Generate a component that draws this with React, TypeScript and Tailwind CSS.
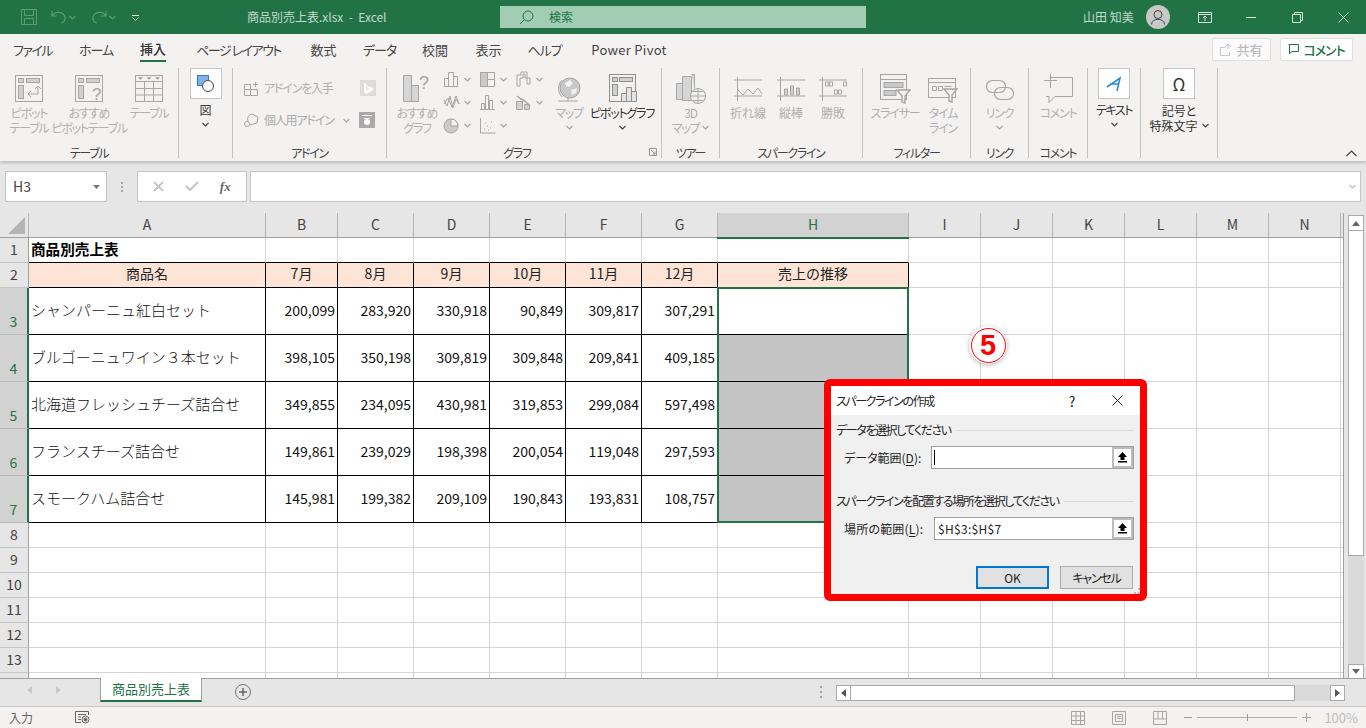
import React from 'react';

const G = '#a6a6a6';

const Svg: React.FC<{ w: number; h?: number; children: React.ReactNode; stroke?: string; className?: string }> = ({ w, h, children, stroke = G, className = '' }) => (
  <svg width={w} height={h ?? w} viewBox={`0 0 ${w} ${h ?? w}`} fill="none" stroke={stroke} strokeWidth="1" className={`shrink-0 ${className}`}>
    {children}
  </svg>
);

const Chev: React.FC<{ color?: string; className?: string }> = ({ color = G, className = '' }) => (
  <svg width="7" height="5" viewBox="0 0 7 5" fill="none" stroke={color} strokeWidth="1.2" className={`shrink-0 ${className}`}>
    <path d="M.5 1 3.5 4 6.5 1" />
  </svg>
);

const PivotIcon = ({ extra }: { extra?: boolean }) => (
  <Svg w={30}>
    <rect x="1.5" y="1.5" width="27" height="26" />
    <rect x="4.5" y="4.5" width="5" height="4" fill="#d0d0d0" />
    <rect x="12.5" y="4.5" width="13" height="4" fill="#d0d0d0" />
    <rect x="4.5" y="11.5" width="5" height="13" fill="#d0d0d0" />
    {extra ? (
      <text x="18" y="26" fontSize="17" fill={G} stroke="none" fontFamily="Liberation Sans">?</text>
    ) : (
      <path d="M24 12v8h-10m3-3-3 3 3 3M21 15l3-3 3 3" />
    )}
  </Svg>
);

const TableIcon = () => (
  <Svg w={30}>
    <rect x="1.5" y="1.5" width="27" height="26" />
    <path d="M1.5 7.5h27M1.5 14.5h27M1.5 21h27M10.5 7.5v20M19.5 7.5v20" />
    <path d="M4 3h5l-2.5 3zM12.5 3h5L15 6zM21 3h5l-2.5 3z" fill={G} stroke="none" />
  </Svg>
);

const ChartSmall = ({ kind }: { kind: number }) => (
  <Svg w={17}>
    {kind === 0 && <path d="M1.5 15.5v-8h4v8zM5.5 15.5v-14h5v14zM10.5 15.5v-10h4v10z" />}
    {kind === 1 && <path d="M1 6l3 6 3-10 3 12 3-9 3 5M1 10l4-6 4 9 4-11 3 8" />}
    {kind === 2 && <><circle cx="8" cy="9" r="7" fill="#c9c9c9" /><path d="M8 9V2a7 7 0 0 1 7 7z" fill="#f3f2f1" /></>}
    {kind === 3 && <><rect x="1.5" y="1.5" width="14" height="14" /><path d="M8.5 1.5v14M8.5 8.5h7" /><rect x="2" y="2" width="6" height="13" fill="#c9c9c9" stroke="none" /></>}
    {kind === 4 && <path d="M2.5 15.5v-6h3v6zM6.5 15.5v-14h3v14zM10.5 15.5v-9h3v9zM1 15.5h15" />}
    {kind === 5 && <><path d="M1.5 1v15h15" /><path d="M5 12h1M8 9h1M11 11h1M6 6h1M12 5h1M9 13h1" /></>}
    {kind === 6 && <path d="M2 15V4h4V1h6v6h3v6h-3V7h-2V3H8v4H5v8z" />}
    {kind === 7 && <><path d="M1.5 15.5v-8h6v8zM9.5 15.5v-5h5v5z" fill="#d0d0d0" /><path d="M2 2l4 3 4 2 5 5" strokeWidth="1.5" /></>}
  </Svg>
);

const Spark = ({ kind }: { kind: number }) => (
  <Svg w={30} h={26}>
    <path d="M1 4h28M1 20h28M4.5 1v24" />
    {kind === 0 && <path d="M5 14l5 5 5-6 5 5 5-6 4 6" />}
    {kind === 1 && <path d="M8.5 19v-6h3v6zM14.5 19v-9h3v9zM20.5 19v-7h3v7z" fill="#d0d0d0" />}
    {kind === 2 && <path d="M7.5 6h3v4h-3zM11.5 6h3v4h-3zM16.5 14h3v4h-3zM20.5 14h3v4h-3zM25.5 6h3v4h-3z" />}
  </Svg>
);

const Slicer = () => (
  <Svg w={32}>
    <rect x="1.5" y="1.5" width="26" height="25" />
    <path d="M1.5 6.5h26" />
    <rect x="5" y="9.5" width="19" height="5" fill="#c9c9c9" />
    <rect x="5" y="17.5" width="12" height="5" fill="#c9c9c9" />
    <path d="M18 17h13l-5 6v7l-3-1v-6z" fill="#f3f2f1" strokeWidth="1.4" />
  </Svg>
);

const Timeline = () => (
  <Svg w={32}>
    <rect x="1.5" y="5.5" width="27" height="19" />
    <path d="M1.5 9.5h27" />
    <path d="M5.5 13.5h4v4h-4zM11.5 13.5h4v4h-4zM17.5 13.5h7" />
    <path d="M17 16h13l-5 6v7l-3-1v-6z" fill="#f3f2f1" strokeWidth="1.4" />
  </Svg>
);

const Group: React.FC<{ w: string; label: string; pl?: string; launcher?: boolean; children: React.ReactNode }> = ({ w, label, pl = 'pl-0', launcher, children }) => (
  <div className={`${w} h-[90px] shrink-0 flex flex-col border-r border-[#c4c4c4] mt-[2px] ${launcher ? 'pr-[14px]' : ''}`}>
    <div className={`flex flex-1 min-h-0 ${pl}`}>{children}</div>
    <div className="relative h-[12px] pt-[1px] text-center text-[12px] leading-[12px] tracking-[-1.3px] text-[#444] whitespace-nowrap">
      {label}
      {launcher && (
        <svg width="8" height="8" viewBox="0 0 8 8" fill="none" stroke="#999" className="absolute right-[-10px] top-[2px]">
          <path d="M.5.5h7v7h-7zM2 2l4 4M6 3.5V6H3.5" />
        </svg>
      )}
    </div>
  </div>
);

const Big: React.FC<{ w: string; icon: React.ReactNode; lines: string[]; chev?: boolean; tail?: boolean; on?: boolean; kanji?: boolean }> = ({ w, icon, lines, chev, tail, on, kanji }) => (
  <div className={`${w} shrink-0 flex flex-col items-center pt-[3px] text-[12px] leading-[14.5px] whitespace-nowrap ${kanji ? '' : 'tracking-[-1.2px]'} ${on ? 'text-[#333]' : 'text-[#b0b0b0]'}`}>
    <div className="h-[35px] flex items-center justify-center">{icon}</div>
    {lines.map((l, i) => (
      <div key={l} className="h-[14.5px] flex items-center gap-[3px]">
        {l}
        {tail && i === lines.length - 1 && <Chev />}
      </div>
    ))}
    {chev && <div className="h-[14px] flex items-center"><Chev color={on ? '#444' : G} /></div>}
  </div>
);

const BoxIcon: React.FC<{ children: React.ReactNode }> = ({ children }) => (
  <div className="w-[32px] h-[31px] bg-white border border-[#c6c6c6] flex items-center justify-center">{children}</div>
);

const Ribbon = () => (
  <div className="h-[95px] bg-[#f3f2f1] flex shadow-[0_2px_3px_rgba(0,0,0,0.18)] relative z-10">
    <Group w="w-[179px]" label="テーブル" pl="pl-[4px]">
      <Big w="w-[50px]" icon={<PivotIcon />} lines={['ピボット', 'テーブル']} />
      <Big w="w-[70px]" icon={<PivotIcon extra />} lines={['おすすめ', 'ピボットテーブル']} />
      <Big w="w-[50px]" icon={<TableIcon />} lines={['テーブル']} />
    </Group>
    <Group w="w-[54px]" label="">
      <div className="w-full flex flex-col items-center text-[12px] text-[#333] leading-[14px]">
        <BoxIcon>
          <svg width="18" height="18" viewBox="0 0 18 18">
            <rect x=".5" y=".5" width="11" height="10" fill="#7fb2e5" stroke="#2b7cd3" />
            <circle cx="11" cy="11" r="5.5" fill="#fff" stroke="#444" />
          </svg>
        </BoxIcon>
        <div className="mt-[4px] h-[14px]">図</div>
        <Chev color="#444" className="mt-[5px]" />
      </div>
    </Group>
    <Group w="w-[154px]" label="アドイン" pl="pl-[11px]">
      <div className="flex flex-col pt-[4px] text-[12px] tracking-[-1.2px] text-[#b0b0b0]">
        <div className="flex items-center h-[32px]">
          <Svg w={16}><path d="M.5 4.5h6v5h-6zM.5 9.5h6v6h-6zM6.5 9.5h7v6h-7zM9 4.5h5M11.5 2v5" /></Svg>
          <span className="ml-[4px] w-[96px]">アドインを入手</span>
          <div className="w-[16px] h-[16px] bg-[#dcdcdc] flex items-center justify-center">
            <svg width="9" height="11" viewBox="0 0 9 11" fill="#fff"><path d="M0 0l2.5 1v7l3-2-1.5-1-1-2.5L9 5v2l-6.500 4L0 9.500z" /></svg>
          </div>
        </div>
        <div className="flex items-center h-[32px]">
          <Svg w={16}><path d="M4 9a5 5 0 0 1 4-7l6 3-1 6-7 2" /><circle cx="3" cy="12" r="2.500" /></Svg>
          <span className="ml-[4px] w-[79px] text-[#a9a9a9]">個人用アドイン</span>
          <Chev className="mr-[9px]" />
          <div className="w-[16px] h-[16px] bg-[#a9a9a9] flex items-center justify-center">
            <svg width="12" height="12" viewBox="0 0 12 12" fill="#fff"><path d="M1 1h10v1H1zM3 4h6v1H3z" /><circle cx="6" cy="8" r="3" /></svg>
          </div>
        </div>
      </div>
    </Group>
    <Group w="w-[275px]" label="グラフ" pl="pl-[5px]" launcher>
      <Big w="w-[50px]" icon={
        <Svg w={30}>
          <path d="M1.500 1.500h8v26h-8zM9.500 11.500h7v16h-7z" fill="#d6d6d6" />
          <text x="17" y="15" fontSize="18" fill={G} stroke="none" fontFamily="Liberation Sans">?</text>
        </Svg>
      } lines={['おすすめ', 'グラフ']} />
      <div className="w-[104px] shrink-0 pl-[1px] grid grid-cols-[36px_36px_32px] grid-rows-[23px_23px_23px] items-center">
        {[0, 3, 6, 1, 4, 7, 2, 5].map(k => (
          <div key={k} className="flex items-center gap-[4px]"><ChartSmall kind={k} /><Chev /></div>
        ))}
      </div>
      <Big w="w-[46px]" icon={
        <Svg w={26}>
          <circle cx="14" cy="12" r="10" fill="#c9c9c9" />
          <path d="M6 4a12 12 0 0 0 0 17M2 25h20M12 21v4" />
          <path d="M9 7l5-3 3 3-4 4-3-1zM15 14l6-2-1 5-4 2z" fill="#f3f2f1" stroke="none" />
        </Svg>
      } lines={['マップ']} chev />
      <Big w="w-[60px]" on icon={
        <Svg w={32} stroke="#8f8f8f">
          <rect x="3.500" y="1.500" width="26" height="27" />
          <rect x="6.500" y="4.500" width="5" height="4" fill="#d0d0d0" />
          <rect x="13.500" y="4.500" width="13" height="4" fill="#d0d0d0" />
          <rect x="6.500" y="11.500" width="5" height="11" fill="#d0d0d0" />
          <path d="M15.500 28.500v-8h5v8zM20.500 28.500v-14h5v14zM25.500 28.500v-10h5v10z" fill="#e4e4e4" />
        </Svg>
      } lines={['ピボットグラフ']} chev />
    </Group>
    <Group w="w-[58px]" label="ツアー">
      <Big w="w-full" tail icon={
        <Svg w={32}>
          <path d="M1.500 10.500h6v16h-6zM7.500 3.500h9v24h-9zM16.500 1.500h3v14" fill="#d6d6d6" />
          <circle cx="23" cy="23" r="7.500" fill="#f3f2f1" />
          <path d="M15.500 23h15M23 15.500v15M17.500 18.500h11M17.500 27.500h11" />
        </Svg>
      } lines={['3D', 'マップ']} />
    </Group>
    <Group w="w-[143px]" label="スパークライン" pl="pl-[6px]">
      <Big w="w-[44px]" kanji icon={<Spark kind={0} />} lines={['折れ線']} />
      <Big w="w-[42px]" kanji icon={<Spark kind={1} />} lines={['縦棒']} />
      <Big w="w-[42px]" kanji icon={<Spark kind={2} />} lines={['勝敗']} />
    </Group>
    <Group w="w-[108px]" label="フィルター" pl="pl-[6px]">
      <Big w="w-[52px]" icon={<Slicer />} lines={['スライサー']} />
      <Big w="w-[44px]" icon={<Timeline />} lines={['タイム', 'ライン']} />
    </Group>
    <Group w="w-[58px]" label="リンク">
      <Big w="w-full" icon={
        <Svg w={30}>
          <rect x="1.500" y="6.500" width="19" height="12" rx="6" strokeWidth="1.200" />
          <rect x="9.500" y="13.500" width="19" height="12" rx="6" strokeWidth="1.200" />
        </Svg>
      } lines={['リンク']} chev />
    </Group>
    <Group w="w-[59px]" label="コメント">
      <Big w="w-full" icon={
        <Svg w={32}>
          <path d="M7.500 4.500h23v19H13l-6 6v-6H4" />
          <path d="M8.500 1v14M2 7.500h13" />
        </Svg>
      } lines={['コメント']} />
    </Group>
    <Group w="w-[53px]" label="">
      <div className="w-full flex flex-col items-center text-[12px] text-[#333] leading-[15px]">
        <BoxIcon>
          <svg width="16" height="16" viewBox="0 0 16 16" fill="none" stroke="#2b8ad8" strokeWidth="1.600">
            <path d="M1 11 14 2 11 15M4 8h8" />
          </svg>
        </BoxIcon>
        <div className="mt-[3px] h-[15px] tracking-[-1.4px]">テキスト</div>
        <Chev color="#444" className="mt-[5px]" />
      </div>
    </Group>
    <Group w="w-[77px]" label="">
      <div className="w-full flex flex-col items-center text-[12px] text-[#333] leading-[15px]">
        <BoxIcon><span className="text-[17px] leading-none">Ω</span></BoxIcon>
        <div className="mt-[4px] h-[15px]">記号と</div>
        <div className="h-[15px] flex items-center gap-[4px] whitespace-nowrap">特殊文字 <Chev color="#444" /></div>
      </div>
    </Group>
    <div className="flex-1 flex justify-end items-end pr-[9px] pb-[4px]">
      <svg width="11" height="7" viewBox="0 0 11 7" fill="none" stroke="#444" strokeWidth="1.200"><path d="M.5 6l5-5 5 5" /></svg>
    </div>
  </div>
);

const TitleBar = () => (
  <div className="h-[34px] bg-[#217346] flex items-center text-[12px] text-[#c3dacd]">
    <div className="w-[247px] shrink-0 flex items-center pl-[21px]">
      <svg width="16" height="16" viewBox="0 0 16 16" fill="none" stroke="#5c9c79"><path d="M.5.5h15v15H.5zM3.500.5v6h9v-6M3.500 15.500v-6h9v6" /></svg>
      <svg width="16" height="14" viewBox="0 0 16 14" fill="none" stroke="#5c9c79" strokeWidth="1.200" className="ml-[14px]"><path d="M1 1v5h5M1 6c3-5 11-5 13 1 1 3-2 6-4 6" /></svg>
      <Chev color="#5c9c79" className="ml-[2px]" />
      <svg width="16" height="14" viewBox="0 0 16 14" fill="none" stroke="#5c9c79" strokeWidth="1.200" className="ml-[15px]"><path d="M15 1v5h-5M15 6C12 1 4 1 2 7c-1 3 2 6 4 6" /></svg>
      <Chev color="#5c9c79" className="ml-[2px]" />
      <svg width="7" height="7" viewBox="0 0 7 7" fill="none" stroke="#cfe3d8" className="ml-[16px]"><path d="M0 1.500h7M.5 3.500 3.500 6.500 6.500 3.500" /></svg>
    </div>
    <div className="w-[253px] shrink-0 whitespace-pre">商品別売上表.xlsx  -  Excel</div>
    <div className="w-[366px] h-[22px] shrink-0 bg-[#a0cdb3] flex items-center pl-[19px] text-[#217346]">
      <svg width="15" height="15" viewBox="0 0 15 15" fill="none" stroke="#217346"><circle cx="9" cy="6" r="5" /><path d="M5.500 9.500 1 14" /></svg>
      <span className="ml-[15px]">検索</span>
    </div>
    <div className="w-[217px] shrink-0" />
    <div className="w-[52px] shrink-0 whitespace-nowrap">山田 知美</div>
    <div className="ml-[11px] w-[24px] h-[24px] rounded-full bg-[#c8c8c8] flex items-center justify-center">
      <svg width="16" height="16" viewBox="0 0 16 16" fill="none" stroke="#444"><circle cx="8" cy="5.500" r="4" /><path d="M1.500 15.500c0-7 13-7 13 0" /></svg>
    </div>
    <div className="ml-[12px] w-[46px] flex justify-center">
      <svg width="14" height="11" viewBox="0 0 14 11" fill="none" stroke="#d4e5db"><path d="M.5.5h13v10H.5zM.5 2.500h13M7 9V4.500M5 6l2-2 2 2" /></svg>
    </div>
    <div className="w-[46px] flex justify-center"><div className="w-[10px] h-px bg-[#d4e5db]" /></div>
    <div className="w-[46px] flex justify-center">
      <svg width="11" height="11" viewBox="0 0 11 11" fill="none" stroke="#d4e5db"><path d="M.5 2.500h8v8h-8zM2.500 2.500v-2h8v8h-2" /></svg>
    </div>
    <div className="w-[46px] flex justify-center">
      <svg width="11" height="11" viewBox="0 0 11 11" fill="none" stroke="#d4e5db"><path d="M.5.5l10 10M10.500.5l-10 10" /></svg>
    </div>
  </div>
);

const tabs = [
  { t: 'ファイル', w: 'w-[65px]', c: 'tracking-[-1.500px]' },
  { t: 'ホーム', w: 'w-[62px]', c: 'tracking-[-1px]' },
  { t: '挿入', w: 'w-[52px]', c: 'font-medium text-[#333] border-b-[2px] border-[#217346]' },
  { t: 'ページ レイアウト', w: 'w-[119px]', c: 'tracking-[-1.500px]' },
  { t: '数式', w: 'w-[51px]', c: '' },
  { t: 'データ', w: 'w-[61px]', c: 'tracking-[-1px]' },
  { t: '校閲', w: 'w-[50px]', c: '' },
  { t: '表示', w: 'w-[57px]', c: '' },
  { t: 'ヘルプ', w: 'w-[55px]', c: 'tracking-[-1px]' },
  { t: 'Power Pivot', w: 'w-[114px]', c: 'tracking-[0.3px]' },
];

const TabRow = () => (
  <div className="h-[32px] bg-[#f3f2f1] flex items-start text-[13px] text-[#444] relative">
    {tabs.map(x => (
      <div key={x.t} className={`${x.w} shrink-0 h-[28px] flex justify-center`}>
        <span className={`h-[28px] pt-[4px] flex items-center whitespace-nowrap ${x.c}`}>{x.t}</span>
      </div>
    ))}
    <div className="flex-1" />
    <div className="w-[59px] h-[23px] mt-[4px] bg-white/70 border border-[#e1dfdd] rounded-[2px] flex items-center justify-center gap-[4px] text-[#bdbdbd] font-medium">
      <svg width="12" height="12" viewBox="0 0 12 12" fill="none" stroke="#c6c6c6"><path d="M8 .5v5M5 3l3-2.500 3 2.500M5 3.500H.5v8h9V8" /></svg>
      共有
    </div>
    <div className="w-[73px] h-[23px] mt-[4px] mr-[13px] ml-[9px] bg-white border border-[#e1dfdd] rounded-[2px] flex items-center justify-center gap-[4px] text-[#217346] font-medium tracking-[-1px]">
      <svg width="11" height="11" viewBox="0 0 11 11" fill="none" stroke="#217346"><path d="M.5.5h10v7H3.500L1.500 10V.5" /></svg>
      コメント
    </div>
  </div>
);

const FormulaBar = () => (
  <div className="h-[52px] bg-[#e6e6e6] flex pt-[10px] pl-[5px] pr-[5px]">
    <div className="w-[102px] h-[31px] bg-white border border-[#c6c6c6] flex items-center justify-between pl-[7px] pr-[6px] text-[14px] text-[#444]">
      H3
      <svg width="7" height="4" viewBox="0 0 7 4" fill="#777"><path d="M0 0h7L3.500 4z" /></svg>
    </div>
    <div className="w-[30px] h-[31px] flex flex-col items-center justify-center gap-[2px]">
      {[0, 1, 2].map(i => <div key={i} className="w-[2px] h-[2px] bg-[#a6a6a6]" />)}
    </div>
    <div className="w-[110px] h-[31px] bg-white border border-[#c6c6c6] flex items-center justify-around px-[5px]">
      <svg width="11" height="11" viewBox="0 0 11 11" fill="none" stroke="#c4c4c4" strokeWidth="1.800"><path d="M1 1l9 9M10 1l-9 9" /></svg>
      <svg width="14" height="11" viewBox="0 0 14 11" fill="none" stroke="#c4c4c4" strokeWidth="2"><path d="M1 5l4 4 8-8" /></svg>
      <span className="[font-family:'Liberation_Serif',serif] italic font-bold text-[13px] text-[#666]">fx</span>
    </div>
    <div className="ml-[3px] flex-1 h-[31px] bg-white border border-[#c6c6c6] flex items-center justify-end pr-[4px]">
      <Chev color="#bbb" />
    </div>
  </div>
);

const colW = ['w-[237px]', 'w-[72px]', 'w-[76px]', 'w-[76px]', 'w-[76px]', 'w-[76px]', 'w-[76px]', 'w-[191px]', 'w-[72px]', 'w-[72px]', 'w-[72px]', 'w-[72px]', 'w-[72px]', 'w-[72px]'];
const colN = 'ABCDEFGHIJKLMN'.split('');
const EMPTY = colN.slice(8);

const data = [
  ['シャンパーニュ紅白セット', '200,099', '283,920', '330,918', '90,849', '309,817', '307,291'],
  ['ブルゴーニュワイン３本セット', '398,105', '350,198', '309,819', '309,848', '209,841', '409,185'],
  ['北海道フレッシュチーズ詰合せ', '349,855', '234,095', '430,981', '319,853', '299,084', '597,498'],
  ['フランスチーズ詰合せ', '149,861', '239,029', '198,398', '200,054', '119,048', '297,593'],
  ['スモークハム詰合せ', '145,981', '199,382', '209,109', '190,843', '193,831', '108,757'],
];
const heads = ['商品名', '7月', '8月', '9月', '10月', '11月', '12月', '売上の推移'];

const RowHead: React.FC<{ n?: number; sel?: boolean }> = ({ n, sel }) => (
  <div className={`w-[29px] shrink-0 flex justify-center text-[14px] ${sel ? 'bg-[#d2d2d2] border-r-2 border-[#217346] border-b border-b-[#b8b8b8] items-end pb-[2px] text-[#217346]' : 'bg-[#e6e6e6] border-r border-[#9f9f9f] border-b border-b-[#c6c6c6] items-center pb-[2px] text-[#444]'}`}>{n}</div>
);

const Blank: React.FC<{ w: string; cls?: string }> = ({ w, cls = 'border-r border-b border-[#d4d4d4]' }) => (
  <div className={`${w} shrink-0 ${cls}`} />
);

const Filler = () => <div className="flex-1 border-b border-[#d4d4d4]" />;

const Sheet = () => (
  <div className="relative flex-1 flex flex-col overflow-hidden [font-feature-settings:normal]">
    <div className="h-[25px] shrink-0 flex bg-[#e6e6e6] border-b border-[#9f9f9f] text-[14px] text-[#444] text-center leading-[23px]">
      <div className="w-[29px] shrink-0 border-r border-[#b5b5b5] flex items-end justify-end pr-[3px] pb-[3px]">
        <svg width="17" height="17" viewBox="0 0 17 17" fill="#b4b4b4"><path d="M17 0v17H0z" /></svg>
      </div>
      {colN.map((c, i) => (
        <div key={c} className={`${colW[i]} shrink-0 border-r ${c === 'H' ? 'bg-[#d2d2d2] text-[#217346] border-[#b5b5b5]' : 'border-[#b5b5b5]'}`}>{c}</div>
      ))}
    </div>
    <div className="absolute left-[717px] top-[24px] w-[192px] h-[2px] bg-[#217346]" />

    <div className="h-[25px] shrink-0 flex text-[14px]">
      <RowHead n={1} />
      <div className={`${colW[0]} shrink-0 border-r border-b border-r-[#d4d4d4] border-b-black pl-[2px] font-bold text-[14.6px] leading-[22px] text-black`}>商品別売上表</div>
      {colW.slice(1, 8).map((w, i) => <Blank key={i} w={w} cls="border-r border-b border-r-[#d4d4d4] border-b-black" />)}
      {EMPTY.map((c, i) => <Blank key={c} w={colW[i + 8]} />)}
      <Filler />
    </div>

    <div className="h-[25px] shrink-0 flex text-[14px]">
      <RowHead n={2} />
      {heads.map((h, i) => (
        <div key={h} className={`${colW[i]} shrink-0 bg-[#fde4d7] border-r border-b border-black text-center leading-[21px] text-[#222]`}>{h}</div>
      ))}
      {EMPTY.map((c, i) => <Blank key={c} w={colW[i + 8]} />)}
      <Filler />
    </div>

    {data.map((r, ri) => (
      <div key={ri} className="h-[47px] shrink-0 flex text-[14px]">
        <RowHead n={ri + 3} sel />
        {r.map((v, i) => (
          <div key={i} className={`${colW[i]} shrink-0 border-r border-b border-black flex items-center text-[#111] ${i === 0 ? 'pl-[2px] text-[15px] pb-[2px] whitespace-nowrap font-light' : 'justify-end pr-[2px] pb-[1px]'}`}>{v}</div>
        ))}
        <Blank w={colW[7]} cls={`border-r border-b border-black ${ri === 0 ? '' : 'bg-[#c4c4c4]'}`} />
        {EMPTY.map((c, i) => <Blank key={c} w={colW[i + 8]} />)}
        <Filler />
      </div>
    ))}

    {[8, 9, 10, 11, 12, 13, 14].map(n => (
      <div key={n} className="h-[25px] shrink-0 flex">
        <RowHead n={n < 14 ? n : undefined} />
        {colW.map((w, i) => <Blank key={i} w={w} />)}
        <Filler />
      </div>
    ))}

    <div className="absolute left-[717px] top-[74px] w-[192px] h-[236px] border-2 border-[#217346]" />
  </div>
);

const VScroll = () => (
  <div className="w-[22px] shrink-0 bg-[#e6e6e6] flex flex-col pl-[4px] pr-[2px] pt-[2px]">
    <div className="w-[16px] h-[16px] bg-white border border-[#ababab] flex items-center justify-center">
      <svg width="8" height="5" viewBox="0 0 8 5" fill="#666"><path d="M0 5h8L4 0z" /></svg>
    </div>
    <div className="w-[16px] h-[325px] bg-white border-x border-b border-[#ababab]" />
    <div className="flex-1 bg-[#dadada]" />
    <div className="w-[16px] h-[15px] mb-[-1px] bg-white border border-[#ababab] flex items-center justify-center">
      <svg width="8" height="5" viewBox="0 0 8 5" fill="#666"><path d="M0 0h8L4 5z" /></svg>
    </div>
  </div>
);

const TabBar = () => (
  <div className="h-[28px] bg-[#e6e6e6] border-t border-[#9f9f9f] flex text-[13px]">
    <div className="w-[100px] shrink-0 flex items-center gap-[24px] pl-[27px] pb-[5px]">
      <svg width="5" height="8" viewBox="0 0 5 8" fill="#c8c8c8"><path d="M5 0v8L0 4z" /></svg>
      <svg width="5" height="8" viewBox="0 0 5 8" fill="#c8c8c8"><path d="M0 0v8l5-4z" /></svg>
    </div>
    <div className="w-[102px] h-[24px] shrink-0 mt-[-1px] bg-white border-x border-[#9f9f9f] border-b-2 border-b-[#217346] flex items-center justify-center text-[#217346]">商品別売上表</div>
    <div className="ml-[33px] mt-[5px] w-[16px] h-[16px] rounded-full border border-[#777] flex items-center justify-center">
      <svg width="8" height="8" viewBox="0 0 8 8" fill="none" stroke="#666" strokeWidth="1.500"><path d="M4 0v8M0 4h8" /></svg>
    </div>
    <div className="w-[571px] shrink-0 flex justify-end pt-[6px]">
      <div className="flex flex-col gap-[3px] pt-[1px]">
        {[0, 1, 2].map(i => <div key={i} className="w-[2px] h-[2px] bg-[#a6a6a6]" />)}
      </div>
    </div>
    <div className="ml-[14px] mt-[6px] w-[509px] h-[16px] flex bg-[#dadada]">
      <div className="w-[15px] shrink-0 bg-white border border-[#ababab] flex items-center justify-center">
        <svg width="5" height="8" viewBox="0 0 5 8" fill="#555"><path d="M5 0v8L0 4z" /></svg>
      </div>
      <div className="w-[444px] shrink-0 bg-white border-y border-r border-[#ababab]" />
      <div className="flex-1" />
      <div className="w-[15px] shrink-0 bg-white border border-[#ababab] flex items-center justify-center">
        <svg width="5" height="8" viewBox="0 0 5 8" fill="#555"><path d="M0 0v8l5-4z" /></svg>
      </div>
    </div>
  </div>
);

const StatusBar = () => (
  <div className="h-[22px] bg-[#f3f2f1] border-t border-[#c8c8c8] flex items-center pl-[9px] text-[12px] text-[#666]">
    <span className="w-[66px]">入力</span>
    <svg width="15" height="13" viewBox="0 0 15 13" fill="none" stroke="#666">
      <path d="M13.500 4V.5H.5v11H6M3 3.500h8M3 6h3M3 8.500h3" />
      <circle cx="10.500" cy="8.500" r="3.500" />
      <circle cx="10.500" cy="8.500" r="1.500" fill="#666" />
    </svg>
    <div className="flex-1" />
    <svg width="14" height="14" viewBox="0 0 14 14" fill="none" stroke="#a6a6a6"><path d="M.5.500h13v13H.5zM5 .5v13M9.500.5v13M.5 5h13M.5 9.500h13" /></svg>
    <svg width="14" height="14" viewBox="0 0 14 14" fill="none" stroke="#a6a6a6" className="ml-[27px]"><path d="M.5.500h13v13H.5zM3.500 3.500h7v7h-7zM5 5.500h4M5 7.500h4" /></svg>
    <svg width="14" height="14" viewBox="0 0 14 14" fill="none" stroke="#a6a6a6" className="ml-[27px]"><path d="M.5.500h13v13H.5zM.5 8h13M5 .5V8M9.500.5V8" /></svg>
    <div className="ml-[17px] w-[8px] h-px bg-[#999]" />
    <div className="relative ml-[5px] w-[100px] h-px bg-[#b0b0b0]">
      <div className="absolute left-[50px] top-[-3px] w-px h-[7px] bg-[#999]" />
    </div>
    <svg width="9" height="9" viewBox="0 0 9 9" fill="none" stroke="#a6a6a6" className="ml-[5px]"><path d="M4.500 0v9M0 4.500h9" /></svg>
    <span className="ml-[13px] mr-[8px] text-[13px] text-[#bdbdbd]">100%</span>
  </div>
);

const UpBtn = () => (
  <div className="w-[21px] h-full shrink-0 bg-white border-2 border-[#bcbcbc] flex items-center justify-center">
    <svg width="11" height="11" viewBox="0 0 11 11" fill="#000"><path d="M5.500 0 10 5H7.500v3h-4V5H1zM1 9h9v1.500H1z" /></svg>
  </div>
);

const Legend: React.FC<{ children: React.ReactNode }> = ({ children }) => (
  <div className="flex items-center gap-[5px] pl-[1px] pr-[6px] whitespace-nowrap">
    <span className="tracking-[-1.4px]">{children}</span>
    <div className="flex-1 h-px bg-[#dcdcdc]" />
  </div>
);

const Ul: React.FC<{ children: React.ReactNode }> = ({ children }) => <span className="underline underline-offset-2">{children}</span>;

const Dialog = () => (
  <div className="absolute left-[824px] top-[379px] w-[323px] h-[222px] border-[7px] border-[#ff0000] rounded-[6px] bg-[#f0f0f0] flex flex-col text-[12px] leading-[16px] text-[#222]">
    <div className="h-[29px] shrink-0 bg-white flex items-center pl-[5px]">
      <span className="flex-1 tracking-[-1.4px]">スパークラインの作成</span>
      <span className="w-[14px] text-[14px] text-center mr-[33px]">?</span>
      <svg width="11" height="11" viewBox="0 0 11 11" fill="none" stroke="#222" className="mr-[17px]"><path d="M.5.5l10 10M10.500.5l-10 10" /></svg>
    </div>
    <div className="flex-1 flex flex-col pl-[4px] pt-[7px] relative">
      <Legend>データを選択してください</Legend>
      <div className="flex items-center mt-[8px] h-[23px]">
        <span className="w-[96px] pl-[9px] shrink-0 whitespace-nowrap">データ範囲(<Ul>D</Ul>):</span>
        <div className="w-[203px] h-full flex border border-[#a0a0a0] bg-white">
          <div className="flex-1 flex items-center pl-[2px]"><div className="w-px h-[15px] bg-black" /></div>
          <UpBtn />
        </div>
      </div>
      <div className="mt-[24px]">
        <Legend>スパークラインを配置する場所を選択してください</Legend>
      </div>
      <div className="flex items-center mt-[8px] h-[23px]">
        <span className="w-[99px] pl-[9px] shrink-0 whitespace-nowrap tracking-[0.2px]">場所の範囲(<Ul>L</Ul>):</span>
        <div className="w-[200px] h-full flex border border-[#a0a0a0] bg-white">
          <div className="flex-1 flex items-center pl-[3px] tracking-[0.3px]">$H$3:$H$7</div>
          <UpBtn />
        </div>
      </div>
      <div className="flex gap-[11px] mt-[26px] pl-[141px]">
        <div className="w-[73px] h-[23px] bg-[#e1e1e1] border-2 border-[#0078d7] flex items-center justify-center">OK</div>
        <div className="w-[73px] h-[23px] bg-[#e1e1e1] border border-[#adadad] flex items-center justify-center tracking-[-1.200px]">キャンセル</div>
      </div>
      <svg width="6" height="6" viewBox="0 0 6 6" fill="#bbb" className="absolute right-0 bottom-0"><path d="M4 0h2v2H4zM0 4h2v2H0zM4 4h2v2H4z" /></svg>
    </div>
  </div>
);

const Badge = () => (
  <div className="absolute left-[969px] top-[326px] w-[38px] h-[38px] rounded-full bg-white shadow-[0_1px_4px_rgba(0,0,0,0.3)] flex items-center justify-center">
    <div className="w-[35px] h-[35px] rounded-full border-[1.5px] border-[#ff0000] flex items-center justify-center [font-family:'Liberation_Sans',sans-serif] font-bold text-[29px] leading-none text-[#ff0000]">5</div>
  </div>
);

export default function App() {
  return (
    <div className="relative w-[1366px] h-[728px] overflow-hidden flex flex-col bg-white [font-family:'Noto_Sans_CJK_JP','Liberation_Sans',sans-serif] [font-feature-settings:'palt']">
      <TitleBar />
      <TabRow />
      <Ribbon />
      <FormulaBar />
      <div className="h-[465px] shrink-0 flex">
        <div className="flex-1 flex border-r border-[#a0a0a0]">
          <Sheet />
        </div>
        <VScroll />
      </div>
      <TabBar />
      <StatusBar />
      <Badge />
      <Dialog />
    </div>
  );
}
